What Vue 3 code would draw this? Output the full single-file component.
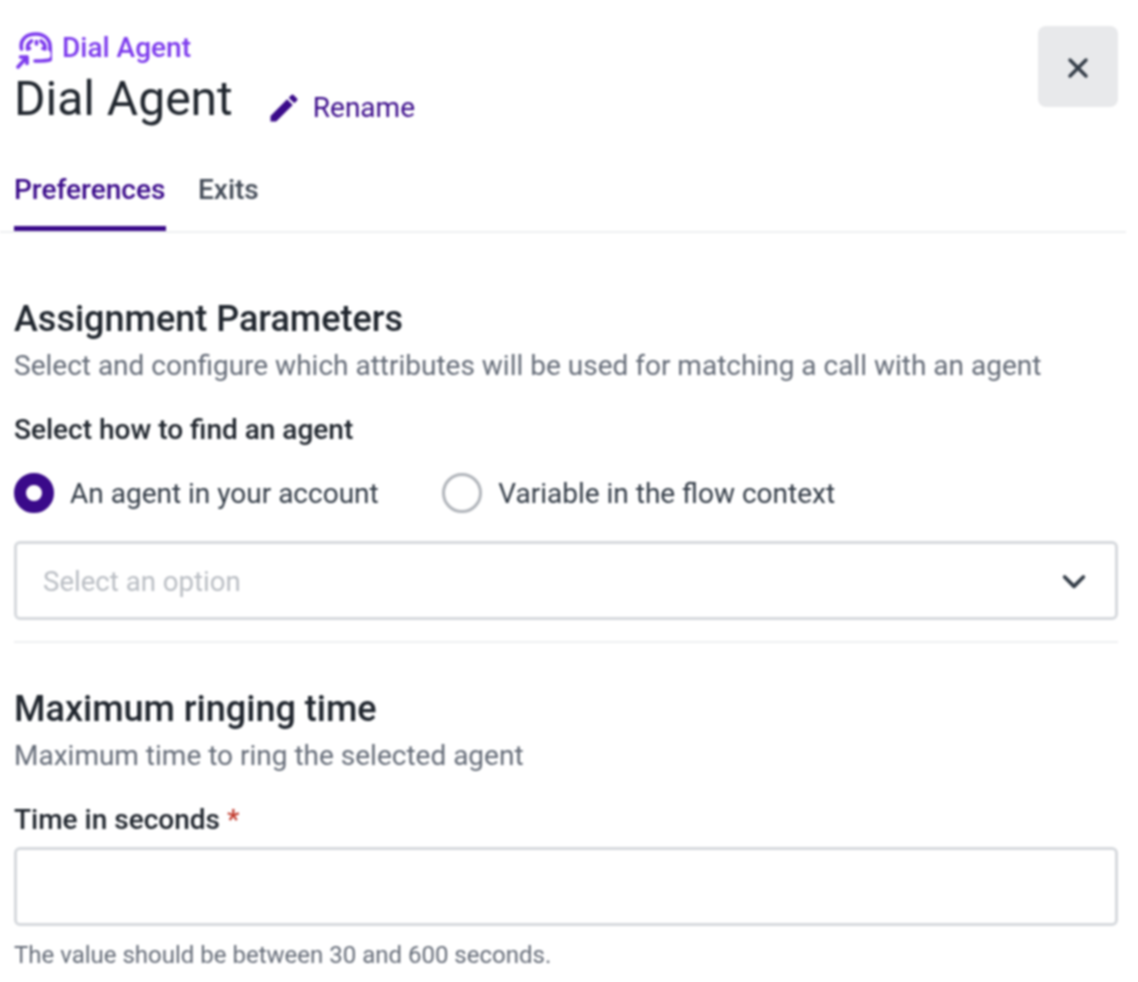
<template>
  <div class="panel">
    <header class="header">
      <div class="headerText">
        <div class="eyebrow">
          <svg class="agentIcon" viewBox="4 5 38 38" fill="none" stroke="#7c3aed" stroke-width="3.6" stroke-linecap="round" stroke-linejoin="round">
            <path d="M11.5 23C9.5 13 17 8 26 8s15 6 14 15" />
            <path d="M17.5 23c-.5-3 1-6 4-8M31 15c3 2 4.500 5 4 8" />
            <path d="M26.500 15.500v2.500M19 22.500h.5M33 22.500h.5" />
            <path d="M40 23c3 2 3 8 1 10-1.500 1.500-4 2-16 2" />
            <path d="M8 41l9-10M10.500 31H17v6.500" />
          </svg>
          <span>Dial Agent</span>
        </div>
        <div class="titleRow">
          <h1 class="title">Dial Agent</h1>
          <button class="rename">
            <svg class="pencil" viewBox="0 0 24 24"><path fill="#3a0a8a" d="M3 17.250V21h3.750L17.810 9.940l-3.750-3.750L3 17.250zM20.710 7.040a1 1 0 0 0 0-1.410l-2.340-2.340a1 1 0 0 0-1.410 0l-1.830 1.830 3.750 3.750 1.830-1.830z" /></svg>
            <span>Rename</span>
          </button>
        </div>
      </div>
      <button class="close">
        <svg viewBox="0 0 24 24" width="32" height="32" fill="none" stroke="#333c47" stroke-width="2.600" stroke-linecap="round"><path d="M6 6l12 12M18 6L6 18" /></svg>
      </button>
    </header>

    <nav class="tabs">
      <div v-for="tab in tabs" :key="tab" class="tab" :class="{ active: tab === activeTab }" @click="activeTab = tab">{{ tab }}</div>
    </nav>

    <section class="section first">
      <h2>Assignment Parameters</h2>
      <p class="desc">Select and configure which attributes will be used for matching a call with an agent</p>
      <div class="label">Select how to find an agent</div>
      <div class="radios">
        <label v-for="opt in options" :key="opt" class="radio" @click="selected = opt">
          <span class="circle" :class="{ on: selected === opt }"></span>
          <span>{{ opt }}</span>
        </label>
      </div>
      <div class="field select">
        <span class="placeholder">Select an option</span>
        <svg viewBox="0 0 24 24" width="32" height="32" fill="none" stroke="#333c47" stroke-width="2.800" stroke-linecap="round" stroke-linejoin="round"><path d="M5 9l7 7 7-7" /></svg>
      </div>
    </section>

    <hr class="divider" />

    <section class="section">
      <h2>Maximum ringing time</h2>
      <p class="desc">Maximum time to ring the selected agent</p>
      <div class="label">Time in seconds <span class="req">*</span></div>
      <div class="field"></div>
      <p class="hint">The value should be between 30 and 600 seconds.</p>
    </section>
  </div>
</template>

<script setup>
import { ref } from "vue";

const tabs = ["Preferences", "Exits"];
const activeTab = ref("Preferences");
const options = ["An agent in your account", "Variable in the flow context"];
const selected = ref(options[0]);
</script>

<style>
body {
  background: #fff;
}
</style>

<style scoped>
.panel {
  width: 1126px;
  height: 982px;
  box-sizing: border-box;
  font-family: Roboto, sans-serif;
  color: #20262e;
  background: #fff;
  filter: blur(0.9px);
}
.header {
  display: flex;
  justify-content: space-between;
  align-items: flex-start;
  padding: 26px 8px 0 14px;
  height: 142px;
  box-sizing: border-box;
}
.eyebrow {
  display: flex;
  align-items: center;
  gap: 10px;
  height: 42px;
  margin-bottom: 2px;
  color: #7c3aed;
  font-size: 28px;
  font-weight: 500;
}
.agentIcon {
  width: 38px;
  height: 38px;
  margin-top: 6px;
}
.titleRow {
  display: flex;
  align-items: center;
  gap: 33px;
}
.title {
  margin: 0;
  padding-top: 2px;
  font-size: 48px;
  font-weight: 400;
  line-height: 54px;
}
.rename {
  display: flex;
  align-items: center;
  gap: 11px;
  padding: 0;
  margin-top: 18px;
  border: 0;
  background: none;
  color: #3a0a8a;
  font: 400 28px Roboto, sans-serif;
}
.pencil {
  width: 36px;
  height: 36px;
  margin-top: 2px;
}
.close {
  width: 80px;
  height: 81px;
  display: flex;
  align-items: center;
  justify-content: center;
  padding: 3px 0 0;
  border: 0;
  border-radius: 8px;
  background: #e8e9eb;
}
.tabs {
  display: flex;
  gap: 32px;
  padding-left: 14px;
  height: 91px;
  border-bottom: 2px solid #eeeff1;
  box-sizing: border-box;
}
.tab {
  height: 89px;
  line-height: 96px;
  font-size: 28px;
  font-weight: 500;
  color: #434b57;
  box-sizing: border-box;
}
.tab.active {
  min-width: 152px;
  color: #3a0a8a;
  border-bottom: 5px solid #3a0a8a;
}
.section {
  padding: 0 8px 0 14px;
}
.section.first {
  padding-top: 64px;
}
h2 {
  margin: 0;
  font-size: 36px;
  font-weight: 500;
  line-height: 44px;
  color: #20262e;
}
.desc {
  margin: 5px 0 0;
  font-size: 28px;
  line-height: 40px;
  color: #656c78;
}
.label {
  margin-top: 24px;
  font-size: 28px;
  font-weight: 500;
  line-height: 40px;
}
.req {
  color: #c0392b;
}
.radios {
  display: flex;
  gap: 63.5px;
  margin-top: 23px;
}
.radio {
  display: flex;
  align-items: center;
  gap: 16px;
  height: 40px;
  font-size: 28px;
  color: #333c47;
}
.circle {
  width: 40px;
  height: 40px;
  box-sizing: border-box;
  border-radius: 50%;
  border: 3px solid #b0b4ba;
  background: #fff;
}
.circle.on {
  border: 12px solid #3a0a8a;
}
.field {
  height: 79px;
  box-sizing: border-box;
  margin-top: 7px;
  border: 3px solid #d6d9dd;
  border-radius: 6px;
}
.select {
  margin-top: 28px;
  display: flex;
  align-items: center;
  justify-content: space-between;
  padding: 0 25px 0 26px;
}
.placeholder {
  padding-top: 2px;
  font-size: 27.6px;
  color: #b9bdc3;
}
.divider {
  height: 2px;
  margin: 21px 8px 0 14px;
  border: 0;
  background: #eeeff1;
}
.divider + .section {
  padding-top: 44px;
}
.hint {
  margin: 13px 0 0;
  font-size: 24px;
  line-height: 32px;
  color: #656c78;
}
</style>
